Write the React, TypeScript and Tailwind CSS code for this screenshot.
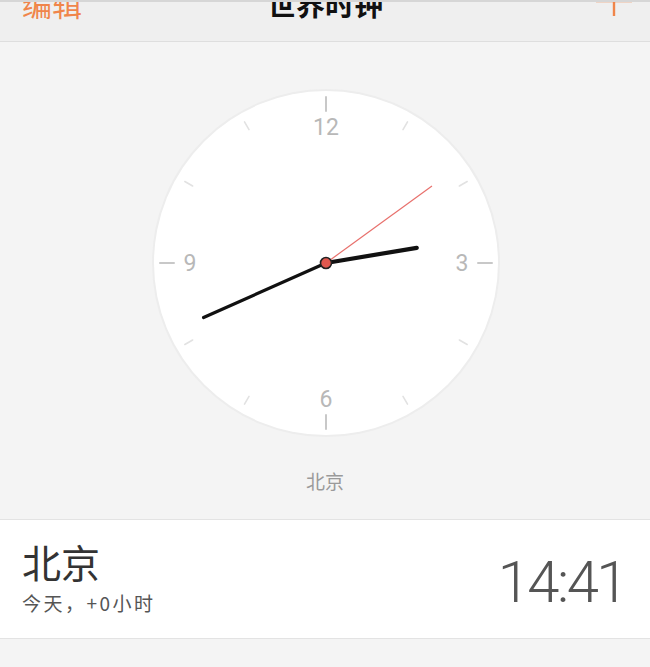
import React from "react";

const CX = 175;
const CY = 176;

const polar = (deg: number, r: number) => {
  const a = (deg * Math.PI) / 180;
  return { x: CX + r * Math.sin(a), y: CY - r * Math.cos(a) };
};

const Clock: React.FC = () => {
  const ticks = Array.from({ length: 12 }, (_, i) => i);
  const hour = polar(80.5, 92);
  const minute = polar(246, 134);
  const second = polar(54, 131);

  return (
    <svg width="350" height="350" viewBox="0 0 350 350">
      <circle cx={CX} cy={CY} r="174" fill="#ededed" />
      <circle cx={CX} cy={CY} r="172" fill="#ffffff" />
      {ticks.map((i) => {
        const major = i % 3 === 0;
        const a = polar(i * 30, major ? 152 : 154);
        const b = polar(i * 30, major ? 166 : 163);
        return (
          <line
            key={i}
            x1={a.x}
            y1={a.y}
            x2={b.x}
            y2={b.y}
            stroke={major ? "#c8c8c8" : "#e2e2e2"}
            strokeWidth={major ? 2 : 1.6}
            strokeLinecap="round"
          />
        );
      })}
      {[
        { t: "12", d: 0 },
        { t: "3", d: 90 },
        { t: "6", d: 180 },
        { t: "9", d: 270 },
      ].map(({ t, d }) => {
        const p = polar(d, 136);
        return (
          <text
            key={t}
            x={p.x}
            y={p.y + 8}
            textAnchor="middle"
            fontSize="23"
            fill="#b8b8b8"
            fontFamily="Roboto, 'Liberation Sans', sans-serif"
          >
            {t}
          </text>
        );
      })}
      <line x1={CX} y1={CY} x2={hour.x} y2={hour.y} stroke="#111" strokeWidth="4.2" strokeLinecap="round" />
      <line x1={CX} y1={CY} x2={minute.x} y2={minute.y} stroke="#111" strokeWidth="3.2" strokeLinecap="round" />
      <line x1={CX} y1={CY} x2={second.x} y2={second.y} stroke="#e8706c" strokeWidth="1.2" />
      <circle cx={CX} cy={CY} r="5.5" fill="#e0584f" stroke="#222" strokeWidth="1.6" />
    </svg>
  );
};

const App: React.FC = () => {
  return (
    <div
      className="w-[650px] h-[667px] overflow-hidden bg-[#f4f4f4]"
      style={{ fontFamily: "'Noto Sans CJK SC', 'Noto Sans', sans-serif" }}
    >
      {/* Header */}
      <div className="h-[42px] bg-[#efefef] border-t-2 border-t-[#d6d6d6] border-b border-b-[#dedede] flex items-start justify-between pl-[22px] pr-[18px] overflow-hidden">
        <span className="-mt-[14px] text-[30px] leading-[30px] text-[#f0854a]">编辑</span>
        <span className="-mt-[14px] mr-[28px] text-[29px] leading-[30px] font-bold text-[#111]">世界时钟</span>
        <svg width="36" height="18" viewBox="0 0 36 18" className="-mt-[2px]">
          <line x1="0" y1="1" x2="36" y2="1" stroke="#f0854a" strokeWidth="2.4" />
          <line x1="18" y1="0" x2="18" y2="16" stroke="#f0854a" strokeWidth="2.4" />
        </svg>
      </div>

      {/* Clock */}
      <div className="flex justify-center pt-[45px] pl-[2px]">
        <Clock />
      </div>

      <div className="text-center text-[19px] leading-[20px] text-[#9a9a9a] mt-[34px]">北京</div>

      {/* City row */}
      <div className="mt-[28px] bg-white border-t border-b border-[#e3e3e3] h-[120px] flex items-start justify-between pl-[22px] pr-[24px]">
        <div className="flex flex-col pt-[21px]">
          <span className="text-[39px] leading-[40px] text-[#333]">北京</span>
          <span className="text-[19px] leading-[24px] tracking-[2.5px] text-[#555] mt-[10px]">今天，+0小时</span>
        </div>
        <span
          className="mt-[33px] text-[58px] leading-[58px] font-light text-[#555] tracking-[-2.5px]"
          style={{ fontFamily: "Roboto, sans-serif" }}
        >
          14:41
        </span>
      </div>
    </div>
  );
};

export default App;
